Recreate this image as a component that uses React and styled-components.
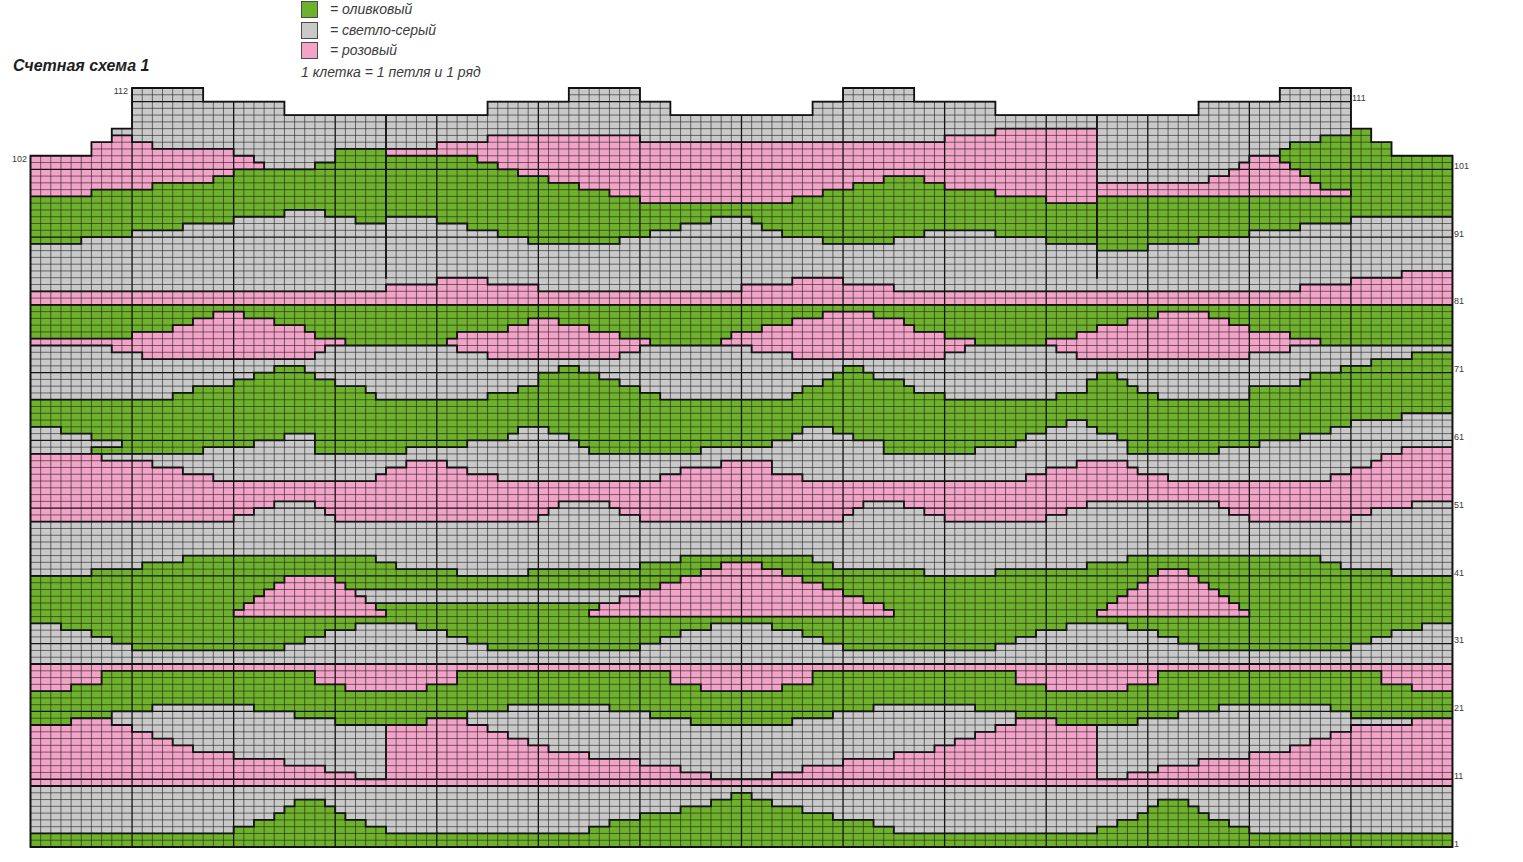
import React from 'react';
import styled, { createGlobalStyle } from 'styled-components';

const GlobalStyle = createGlobalStyle`
  html, body { margin: 0; padding: 0; background: #fff; }
  body { font-family: "Liberation Sans", Arial, sans-serif; }
`;

const COLORS = { g: '#6eb12b', s: '#c9c9c9', p: '#f3a3c7' };

const COLS = 140;
const X0 = 30.5;
const CW = 10.157;
const Y1 = 847;
const CH = 6.777;
const x = (c) => +(X0 + c * CW).toFixed(2);
const y = (r) => +(Y1 - r * CH).toFixed(2);

// "a-b:v,c:v" -> array of 140 values
const prof = (str, def = 0) => {
  const a = new Array(COLS).fill(def);
  str.split(',').forEach((part) => {
    const [rng, v] = part.split(':');
    const [s, e] = rng.split('-').map(Number);
    for (let c = s; c <= (isNaN(e) ? s : e); c++) a[c] = Number(v);
  });
  return a;
};

const B1 = prof('0-19:2,20-21:3,22-23:4,24:5,25:6,26-28:7,29:6,30:5,31-32:4,33-34:3,35-54:2,55-56:3,57-59:4,60-63:5,64-66:6,67-68:7,69-70:8,71-72:7,73-75:6,76-78:5,79-82:4,83-84:3,85-104:2,105-106:3,107-108:4,109:5,110:6,111-113:7,114:6,115:5,116-117:4,118-119:3,120-139:2');
const P1 = prof('0-3:18,4-7:19,8-9:18,10-11:17,12-13:16,14-15:15,16-19:14,20-24:13,25-28:12,29-31:11,32-34:10,35-38:18,39-42:19,43-44:18,45-46:17,47-48:16,49-50:15,51-54:14,55-59:13,60-63:12,64-66:11,67-72:10,73-75:11,76-79:12,80-84:13,85-88:14,89-90:15,91-92:16,93-94:17,95-96:18,97-100:19,101-104:18,105-107:10,108-110:11,111-114:12,115-119:13,120-123:14,124-125:15,126-127:16,128-129:17,130-135:18,136-139:19');
const G1 = prof('0-3:18,4-7:19,8-11:20,12-21:21,22-25:20,26-29:19,30-38:18,39-42:19,43-46:20,47-56:21,57-60:20,61-64:19,65-74:18,75-78:19,79-82:20,83-92:21,93-96:20,97-100:19,101-108:18,109-112:19,113-116:20,117-127:21,128-129:20,130-139:19');
const P2B = prof('0-3:24,4-6:25,7-27:27,28-30:25,31-38:24,39-41:25,42-62:27,63-65:25,66-73:24,74-76:25,77-96:27,97-99:25,100-107:24,108-110:25,111-132:27,133-135:25,136-139:24');
const G3 = prof('0-2:33,3-5:32,6-7:31,8-9:30,10-24:29,25-26:30,27-28:31,29-31:32,32-37:33,38-40:32,41-42:31,43-44:30,45-59:29,60-61:30,62-63:31,64-66:32,67-72:33,73-75:32,76-77:31,78-79:30,80-94:29,95-96:30,97-98:31,99-101:32,102-107:33,108-110:32,111-112:31,113-114:30,115-129:29,130-131:30,132-133:31,134-136:32,137-139:33');
const ISL = prof('20:35,21:36,22:37,23:38,24:39,25-29:40,30:39,31:38,32:37,33:36,34:35,55:35,56-57:36,58-59:37,60-61:38,62-63:39,64-65:40,66-67:41,68-71:42,72-73:41,74-75:40,76-77:39,78-79:38,80-81:37,82-83:36,84:35,105:35,106:36,107:37,108:38,109:39,110:40,111-113:41,114:40,115:39,116:38,117:37,118:36,119:35');
const G4B = prof('0-5:41,6-10:42,11-14:43,15-33:44,34-35:43,36-41:42,42-48:41,49-59:42,60-63:43,64-76:44,77-78:43,79-87:42,88-94:41,95-103:42,104-107:43,108-126:44,127-128:43,129-133:42,134-139:41');
const G4T = prof('0-19:48,20-21:49,22-23:50,24-27:51,28:50,29:49,30-49:48,50:49,51:50,52-56:51,57:50,58-59:49,60-79:48,80:49,81:50,82-85:51,86-87:50,88-89:49,90-99:48,100-101:49,102-103:50,104-116:51,117:50,118-119:49,120-129:48,130-131:49,132-135:50,136-139:51');
const P5 = prof('0-6:58,7-11:57,12-14:56,15-17:55,18-33:54,34:55,35-36:56,37-40:57,41-42:56,43-45:55,46-61:54,62-63:55,64-67:56,68-72:57,73-75:55,76-97:54,98-99:55,100-102:56,103-107:57,108:56,109-111:55,112-127:54,128-129:55,130-131:56,132:57,133-134:58,135-139:59');
const G6 = prof('0-2:62,3-5:61,6-16:58,17-21:59,22-24:60,25-27:61,28-36:58,37-42:59,43-46:60,47:61,48-50:62,51-52:61,53:60,54:59,55-65:58,66-72:59,73-74:60,75:61,76-78:62,79-80:61,81-83:60,84-92:58,93-96:59,97:60,98-99:61,100-101:62,102-103:63,104:62,105-106:61,107:60,108-116:58,117-120:59,121-124:60,125-127:61,128-129:62,130-134:63,135-139:64');
const G7 = prof('0-13:66,14-15:67,16-19:68,20-21:69,22-23:70,24-26:71,27:70,28-29:69,30-32:68,33:67,34-44:66,45-47:67,48-49:68,50-51:70,52-53:71,54-55:70,56-57:69,58-59:68,60-61:67,62-74:66,75:67,76-77:68,78:69,79:70,80-81:71,82:70,83-85:69,86:68,87-89:67,90-100:66,101-103:67,104:69,105-106:70,107:69,108:68,109-110:67,111-119:66,120-124:68,125:69,126-128:70,129-131:71,132-135:72,136-139:73');
const P9B = prof('0-7:75,8-10:74,11-27:73,28:74,29-30:75,41:75,42-44:74,45-57:73,58-59:74,60:75,68-70:75,71-74:74,75-89:73,90-91:74,92:75,100:75,101-102:74,103-119:73,120-123:74,124-126:75');
const P9T = prof('0-9:75,10-13:76,14-15:77,16-17:78,18-20:79,21-23:78,24-26:77,27:76,28-30:75,41:75,42-46:76,47-48:77,49-51:78,52-54:77,55-57:76,58-60:75,68:75,69-71:76,72-74:77,75-77:78,78-82:79,83-85:78,86:77,87-89:76,90-92:75,100-102:75,103-104:76,105-107:77,108-110:78,111-115:79,116-117:78,118-119:77,120-123:76,124-126:75');
const P11 = prof('0-34:82,35-39:83,40-44:84,45-49:83,50-69:82,70-74:83,75-79:84,80-84:83,85-124:82,125-129:83,130-134:84,135-139:85');
const G12 = prof('0-4:89,5-9:90,10-14:91,15-19:92,20-24:93,25-28:94,29-31:93,32-34:92,35-39:93,40-42:92,43-45:91,46-48:90,49-57:89,58-60:90,61-63:91,64-66:92,67-70:93,71:92,72-73:91,74-77:90,78-84:89,85-87:90,88-94:91,95-99:90,100-104:89,105-109:88,110-114:89,115-119:90,120-124:91,125-129:92,130-139:93');
const G13 = prof('0-5:96,6-11:97,12-17:98,18-19:99,20-27:100,28-29:101,30-34:103,35-43:102,44-45:101,46-47:100,48-50:99,51-53:98,54-56:97,57-59:96,60-74:95,75-77:96,78-80:97,81-83:98,84-87:99,88-89:98,90-94:97,95-99:96,100-104:95,105-129:96,130-131:106,132-133:104,134-139:102');
const P14 = prof('0-5:102,6-7:104,8-9:105,10-11:104,12-19:103,20-21:102,22:101,35-39:103,40-44:104,45-59:105,60-89:104,90-94:105,95-104:106,105-115:98,116-117:99,118:100,119:101,120-122:102,123:101,124:100,125:99,126:98,127-129:97');
const G14 = prof('123:103,124-126:104,127-129:105');
const TOP = prof('0-5:102,6-7:104,8-9:106,10-16:112,17-24:110,25-44:108,45-52:110,53-59:112,60-62:110,63-76:108,77-79:110,80-86:112,87-94:110,95-114:108,115-122:110,123-129:112,130-131:106,132-133:104,134-139:102');

const buildGrid = () => {
  const grid = [];
  for (let c = 0; c < COLS; c++) {
    const col = new Array(114).fill(null);
    const paint = (lo, hi, k) => { for (let r = lo; r <= hi; r++) col[r] = k; };
    paint(1, B1[c], 'g');
    paint(B1[c] + 1, 9, 's');
    paint(10, P1[c], 'p');
    paint(P1[c] + 1, G1[c], 's');
    paint(Math.max(P1[c], G1[c]) + 1, P2B[c] - 1, 'g');
    paint(P2B[c], 27, 'p');
    paint(28, G3[c], 's');
    paint(G3[c] + 1, G4B[c] - 1, 'g');
    if (c >= 32 && c <= 59) paint(37, 38, 's');
    if (ISL[c]) paint(35, ISL[c], 'p');
    paint(G4B[c], G4T[c], 's');
    paint(G4T[c] + 1, P5[c], 'p');
    paint(P5[c] + 1, G6[c], 's');
    paint(Math.max(P5[c], G6[c]) + 1, G7[c], 'g');
    if (c >= 6 && c <= 8) paint(60, 60, 's');
    paint(G7[c] + 1, 74, 's');
    paint(75, 80, 'g');
    if (P9T[c]) paint(P9B[c], P9T[c], 'p');
    paint(81, P11[c], 'p');
    paint(P11[c] + 1, G12[c], 's');
    paint(G12[c] + 1, G13[c], 'g');
    let top = G13[c];
    if (P14[c] > top) { paint(top + 1, P14[c], 'p'); top = P14[c]; }
    if (G14[c] > top) { paint(top + 1, G14[c], 'g'); top = G14[c]; }
    paint(top + 1, TOP[c], 's');
    for (let r = TOP[c] + 1; r < 114; r++) col[r] = null;
    grid.push(col);
  }
  return grid;
};

const grid = buildGrid();
const at = (c, r) => (c < 0 || c >= COLS || r < 1 ? null : grid[c][r]);

const buildCells = () => {
  const cells = [];
  for (let r = 1; r <= 112; r++) {
    let c = 0;
    while (c < COLS) {
      const k = at(c, r);
      if (!k) { c++; continue; }
      let e = c;
      while (e + 1 < COLS && at(e + 1, r) === k) e++;
      cells.push({ key: `${r}-${c}`, k, x: x(c), y: y(r), w: +(x(e + 1) - x(c)).toFixed(2) });
      c = e + 1;
    }
  }
  return cells;
};

const buildGridLines = () => {
  let thin = '';
  let major = '';
  for (let i = 0; i <= COLS; i++) {
    const h = Math.max(i > 0 ? TOP[i - 1] : 0, i < COLS ? TOP[i] : 0);
    const d = `M${x(i)} ${Y1}V${y(h)}`;
    if (i % 10 === 0) major += d; else thin += d;
  }
  for (let r = 0; r <= 112; r++) {
    let c = 0;
    while (c < COLS) {
      if (TOP[c] < r) { c++; continue; }
      let e = c;
      while (e + 1 < COLS && TOP[e + 1] >= r) e++;
      const d = `M${x(c)} ${y(r)}H${x(e + 1)}`;
      if (r % 10 === 0) major += d; else thin += d;
      c = e + 1;
    }
  }
  return { thin, major };
};

const buildEdges = () => {
  let d = '';
  for (let c = 0; c < COLS; c++) {
    for (let r = 1; r <= TOP[c]; r++) {
      const k = at(c, r);
      if (!k) continue;
      if (at(c - 1, r) === null) d += `M${x(c)} ${y(r)}V${y(r - 1)}`;
      if (at(c + 1, r) !== k) d += `M${x(c + 1)} ${y(r)}V${y(r - 1)}`;
      if (at(c, r + 1) !== k) d += `M${x(c)} ${y(r)}H${x(c + 1)}`;
      if (r === 1) d += `M${x(c)} ${y(0)}H${x(c + 1)}`;
    }
  }
  d += `M${x(35)} ${y(108)}V${y(84)}M${x(105)} ${y(108)}V${y(84)}`;
  return d;
};

const cells = buildCells();
const gridLines = buildGridLines();
const edges = buildEdges();

const leftLabels = [102, 112];
const rightLabels = [1, 11, 21, 31, 41, 51, 61, 71, 81, 91, 101, 111];
const rowMid = (r) => +(Y1 - (r - 0.5) * CH).toFixed(2);

const Page = styled.div`
  width: 1523px;
  height: 862px;
  overflow: hidden;
  display: flex;
  flex-direction: column;
`;

const Header = styled.div`
  height: 85px;
  display: flex;
  align-items: flex-start;
`;

const Title = styled.div`
  width: 288px;
  margin: 55px 0 0 13px;
  font-size: 16px;
  line-height: 22px;
  font-weight: bold;
  font-style: italic;
  color: #1e1e1e;
`;

const Legend = styled.div`
  display: flex;
  flex-direction: column;
  padding-top: 1px;
`;

const LegendRow = styled.div`
  display: flex;
  align-items: flex-start;
  gap: 12px;
  height: 20.5px;
`;

const Swatch = styled.div`
  width: 15px;
  height: 15px;
  border: 1px solid #4a4a4a;
  background: ${(p) => p.$color};
`;

const LegendText = styled.span`
  font-size: 14px;
  line-height: 17px;
  font-style: italic;
  color: #3c3c3c;
`;

const Note = styled.div`
  margin-top: 1px;
  font-size: 14px;
  line-height: 17px;
  font-style: italic;
  color: #3c3c3c;
`;

const Chart = styled.svg`
  display: block;
  flex: none;
`;

const Cell = styled.rect`
  shape-rendering: crispEdges;
`;

const Label = styled.text`
  font-family: "Liberation Sans", Arial, sans-serif;
  font-size: 9px;
  fill: #3a3a3a;
`;

const legendItems = [
  { color: COLORS.g, text: '= оливковый' },
  { color: COLORS.s, text: '= светло-серый' },
  { color: COLORS.p, text: '= розовый' },
];

export default function App() {
  return (
    <Page>
      <GlobalStyle />
      <Header>
        <Title>Счетная схема 1</Title>
        <Legend>
          {legendItems.map((item) => (
            <LegendRow key={item.text}>
              <Swatch $color={item.color} />
              <LegendText>{item.text}</LegendText>
            </LegendRow>
          ))}
          <Note>1 клетка = 1 петля и 1 ряд</Note>
        </Legend>
      </Header>
      <Chart width="1523" height="777" viewBox="0 85 1523 777">
        {cells.map((cell) => (
          <Cell key={cell.key} x={cell.x} y={cell.y} width={cell.w} height={CH + 0.05} fill={COLORS[cell.k]} />
        ))}
        <path d={gridLines.thin} stroke="#1e1e1e" strokeOpacity="0.85" strokeWidth="0.7" fill="none" />
        <path d={gridLines.major} stroke="#151515" strokeWidth="1.3" fill="none" />
        <path d={edges} stroke="#121212" strokeWidth="1.8" strokeLinecap="square" fill="none" />
        {leftLabels.map((r) => (
          <Label key={`l${r}`} x={r === 112 ? 128 : 27} y={rowMid(r) + 3} textAnchor="end">{r}</Label>
        ))}
        {rightLabels.map((r) => (
          <Label key={`r${r}`} x={r === 111 ? 1352 : 1454} y={rowMid(r) + 3}>{r}</Label>
        ))}
      </Chart>
    </Page>
  );
}
